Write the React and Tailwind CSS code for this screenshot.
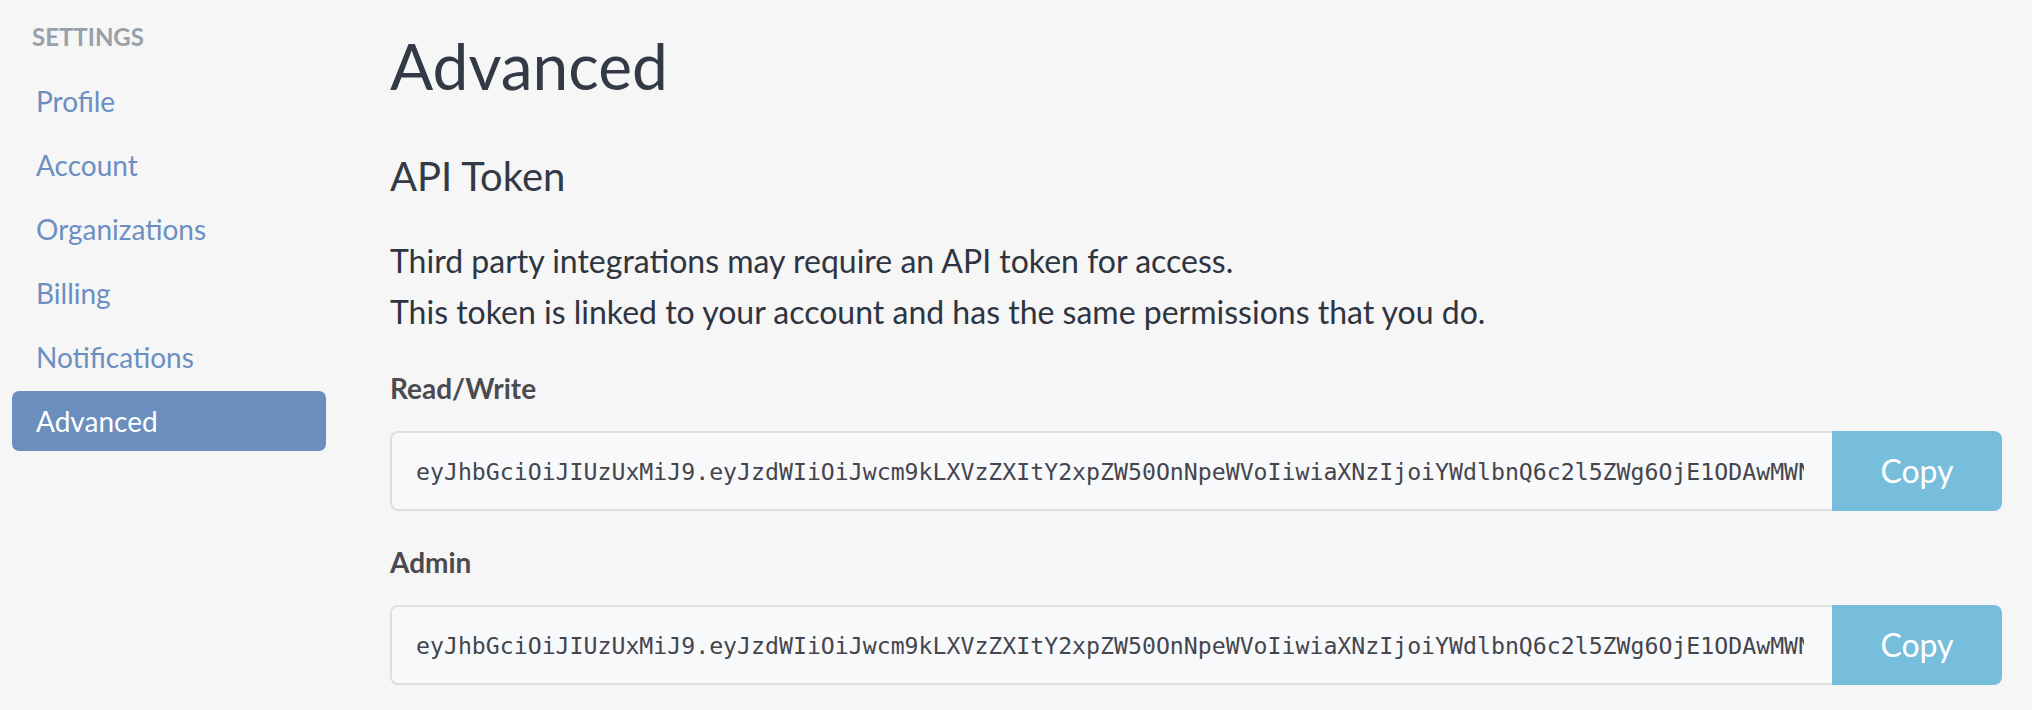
import { useState } from "react";

const TOKEN =
  "eyJhbGciOiJIUzUxMiJ9.eyJzdWIiOiJwcm9kLXVzZXItY2xpZW50OnNpeWVoIiwiaXNzIjoiYWdlbnQ6c2l5ZWg6OjE1ODAwMWNjYzI5ZDQ0LTRlMmQtOGYyMS1hZGRmNTk3YjQ5OWMiLCJpYXQiOjE1Mjk0OTg4MDB9";

const NAV = ["Profile", "Account", "Organizations", "Billing", "Notifications", "Advanced"];

function TokenField({ label, value }) {
  return (
    <div>
      <div className="mt-[34px] text-[28px] leading-[34px] font-bold text-[#4a4a50]">{label}</div>
      <div className="mt-[26px] flex h-[80px]">
        <input
          readOnly
          value={value}
          className="flex-1 min-w-0 h-full rounded-l-[8px] border-2 border-r-0 border-[#dfdfdf] bg-[#f8f9fb] pl-[24px] pr-[28px] font-['DejaVu_Sans_Mono',monospace] text-[23.2px] text-[#45454d] outline-none"
        />
        <button className="w-[170px] h-full rounded-r-[8px] bg-[#76bedb] text-[32px] text-white">
          Copy
        </button>
      </div>
    </div>
  );
}

export default function App() {
  const [active] = useState("Advanced");
  return (
    <div className="min-h-screen bg-[#f6f6f6] flex font-['Lato',sans-serif]">
      <aside className="w-[326px] shrink-0 pl-3">
        <div className="mt-[23px] pl-5 text-[24px] leading-[28px] font-bold text-[#98a0aa]">SETTINGS</div>
        <nav className="mt-5 flex flex-col gap-1">
          {NAV.map((item) => (
            <a
              key={item}
              href="#"
              className={
                item === active
                  ? "h-[60px] flex items-center px-6 rounded-[7px] bg-[#6a8fbf] text-white text-[28px]"
                  : "h-[60px] flex items-center px-6 rounded-[7px] text-[#6b8fc2] text-[28px]"
              }
            >
              {item}
            </a>
          ))}
        </nav>
      </aside>
      <main className="flex-1 ml-[64px] pr-[30px] pt-[31px]">
        <h1 className="text-[64px] leading-[70px] text-[#333a45]">Advanced</h1>
        <h2 className="mt-[51px] text-[40px] leading-[48px] text-[#333a45]">API Token</h2>
        <p className="mt-[35px] text-[32px] leading-[51px] text-[#2e3440]">
          Third party integrations may require an API token for access.
          <br />
          This token is linked to your account and has the same permissions that you do.
        </p>
        <TokenField label="Read/Write" value={TOKEN} />
        <div className="mt-[7px]">
          <TokenField label="Admin" value={TOKEN} />
        </div>
      </main>
    </div>
  );
}
